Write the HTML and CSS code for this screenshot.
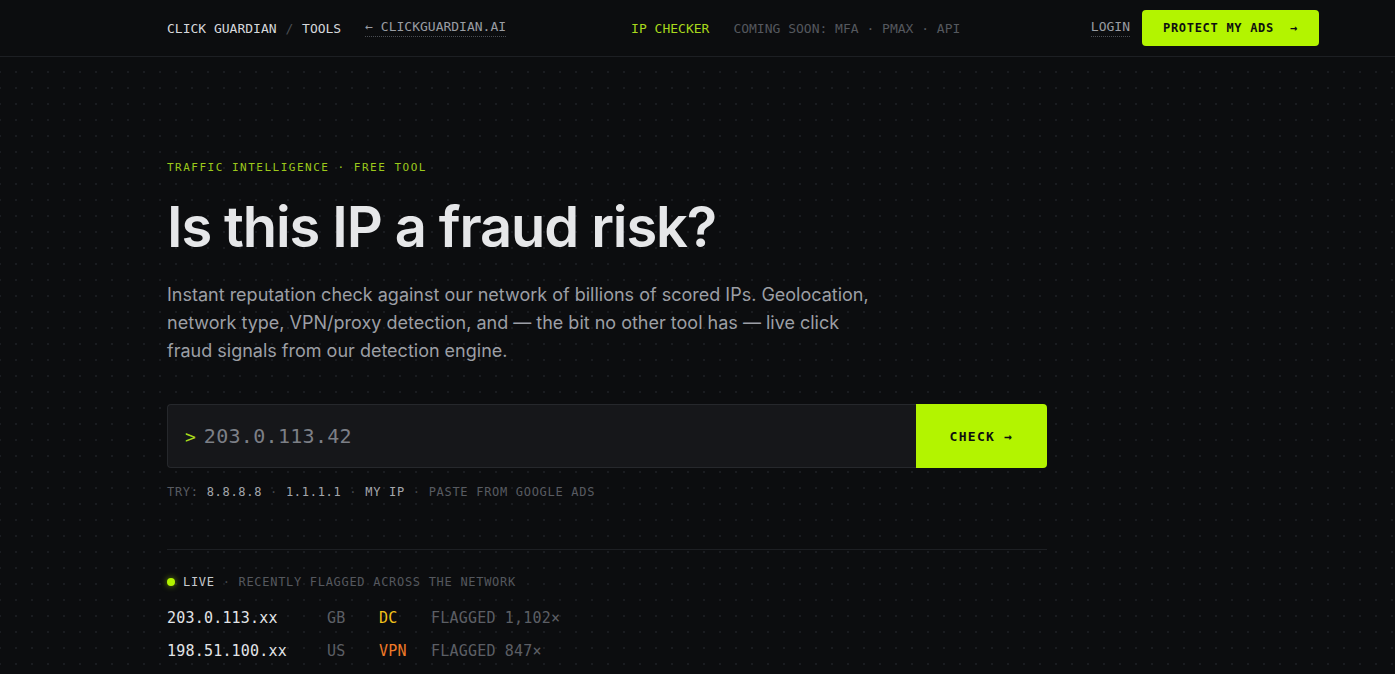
FILE: index.html
```html
<!DOCTYPE html>
<html>
<head>
  <meta charset="UTF-8">
  <link rel="stylesheet" href="styles.css">
</head>
<body>
  <header class="topbar">
    <div class="brand">
      <span class="brand-name">CLICK GUARDIAN <span class="slash">/</span> TOOLS</span>
      <a class="back-link" href="#">← CLICKGUARDIAN.AI</a>
    </div>
    <nav class="nav">
      <a class="nav-active" href="#">IP CHECKER</a>
      <span class="nav-soon">COMING SOON: MFA · PMAX · API</span>
    </nav>
    <div class="actions">
      <a class="login" href="#">LOGIN</a>
      <a class="cta" href="#"><span>PROTECT MY ADS</span><span>→</span></a>
    </div>
  </header>

  <main class="hero">
    <p class="eyebrow">TRAFFIC INTELLIGENCE · FREE TOOL</p>
    <h1 class="headline">Is this IP a fraud risk?</h1>
    <p class="lede">Instant reputation check against our network of billions of scored IPs. Geolocation, network type, VPN/proxy detection, and — the bit no other tool has — live click fraud signals from our detection engine.</p>

    <form class="search">
      <label class="search-field">
        <span class="prompt">&gt;</span>
        <input type="text" placeholder="203.0.113.42">
      </label>
      <button class="check" type="button">CHECK →</button>
    </form>

    <p class="tries">
      <span class="muted">TRY:</span> <a href="#">8.8.8.8</a> <span class="sep">·</span> <a href="#">1.1.1.1</a> <span class="sep">·</span> <a href="#">MY IP</a> <span class="sep">·</span> <span class="muted">PASTE FROM GOOGLE ADS</span>
    </p>

    <section class="feed">
      <p class="feed-title"><span class="live-dot"></span><span class="live">LIVE</span> <span class="sep">·</span> RECENTLY FLAGGED ACROSS THE NETWORK</p>
      <div class="feed-row">
        <span class="ip">203.0.113.xx</span>
        <span class="geo">GB</span>
        <span class="type type-dc">DC</span>
        <span class="count">FLAGGED 1,102×</span>
      </div>
      <div class="feed-row">
        <span class="ip">198.51.100.xx</span>
        <span class="geo">US</span>
        <span class="type type-vpn">VPN</span>
        <span class="count">FLAGGED 847×</span>
      </div>
    </section>
  </main>
</body>
</html>
```

FILE: styles.css
```css
body {
  margin: 0;
  background-color: #0c0d0f;
  background-image: radial-gradient(circle at center, #1a1c20 0, #1a1c20 1px, transparent 1.5px);
  background-size: 16px 16px;
  background-position: -8px 0;
  color: #e6e7e9;
  font-family: Inter, "Noto Sans", sans-serif;
  overflow: hidden;
}
p, h1 {
  margin: 0;
}
a {
  color: inherit;
  text-decoration: none;
}
.topbar, .eyebrow, .search, .tries, .feed {
  font-family: "DejaVu Sans Mono", "Liberation Mono", monospace;
}

/* top bar */
.topbar {
  height: 56px;
  padding: 0 76px 0 167px;
  display: flex;
  align-items: center;
  background: #0c0d0f;
  border-bottom: 1px solid #1d1f23;
  font-size: 13px;
  letter-spacing: 0;
}
.brand {
  display: flex;
  align-items: center;
  gap: 24px;
}
.brand-name {
  color: #d6d8dc;
}
.slash {
  color: #4a4d53;
  margin: 0 1px;
}
.back-link, .login {
  color: #9a9da3;
  padding-bottom: 2px;
  border-bottom: 1px dotted #4a4d53;
}
.nav {
  display: flex;
  gap: 24px;
  margin-left: 125px;
}
.nav-active {
  color: #a8d81c;
}
.nav-soon {
  color: #55585e;
}
.actions {
  margin-left: auto;
  display: flex;
  align-items: center;
  gap: 12px;
}
.cta {
  height: 36px;
  width: 177px;
  box-sizing: border-box;
  padding: 0 21px;
  display: flex;
  align-items: center;
  justify-content: space-between;
  background: #b3f400;
  color: #0e0f10;
  border-radius: 4px;
  font-size: 12px;
  letter-spacing: 0.7px;
  font-weight: bold;
}

/* hero */
.hero {
  width: 880px;
  margin-left: 167px;
  padding-top: 103px;
}
.eyebrow {
  font-size: 11px;
  line-height: 16px;
  letter-spacing: 1.5px;
  color: #9cc91b;
}
.headline {
  margin-top: 20px;
  font-size: 56px;
  line-height: 62px;
  font-weight: 600;
  letter-spacing: -1.1px;
  color: #e6e7e9;
}
.lede {
  margin-top: 23px;
  max-width: 720px;
  font-size: 18px;
  line-height: 28px;
  color: #9c9fa5;
}

/* search */
.search {
  margin-top: 39px;
  display: flex;
  height: 64px;
}
.search-field {
  flex: 1;
  display: flex;
  align-items: center;
  gap: 8px;
  padding: 0 17px;
  background: #16171a;
  border: 1px solid #26282c;
  border-right: 0;
  border-radius: 4px 0 0 4px;
}
.prompt {
  color: #a8d81c;
  font-size: 18px;
}
.search-field input {
  flex: 1;
  border: 0;
  outline: 0;
  background: transparent;
  font-family: inherit;
  font-size: 20px;
  letter-spacing: 0.3px;
  color: #e6e7e9;
  padding: 0;
}
.search-field input::placeholder {
  color: #7c7f86;
}
.check {
  width: 131px;
  border: 0;
  background: #b3f400;
  color: #0e0f10;
  border-radius: 0 4px 4px 0;
  font-family: inherit;
  font-size: 13px;
  font-weight: bold;
  letter-spacing: 1.3px;
}
.tries {
  margin-top: 16px;
  font-size: 12px;
  line-height: 16px;
  letter-spacing: 0.7px;
  color: #a4a7ac;
}
.muted {
  color: #585b61;
}
.sep {
  color: #43464b;
}

/* live feed */
.feed {
  margin-top: 49px;
  border-top: 1px solid #1d1f23;
  padding-top: 24px;
}
.feed-title {
  font-size: 12px;
  line-height: 16px;
  letter-spacing: 0.7px;
  color: #55585e;
}
.live-dot {
  display: inline-block;
  vertical-align: 0;
  width: 8px;
  height: 8px;
  border-radius: 50%;
  background: #b3f400;
  box-shadow: 0 0 6px rgba(179, 244, 0, 0.6);
  margin-right: 8px;
}
.live {
  color: #c8cacf;
}
.feed-row {
  display: flex;
  height: 33px;
  align-items: center;
  font-size: 15px;
  letter-spacing: 0.2px;
}
.feed-row:first-of-type {
  margin-top: 11px;
}
.ip {
  width: 160px;
  color: #e2e4e7;
}
.geo {
  width: 52px;
  color: #5c5f65;
}
.type {
  width: 52px;
}
.type-dc {
  color: #f2c21b;
}
.type-vpn {
  color: #f07a28;
}
.count {
  color: #5c5f65;
}
```
